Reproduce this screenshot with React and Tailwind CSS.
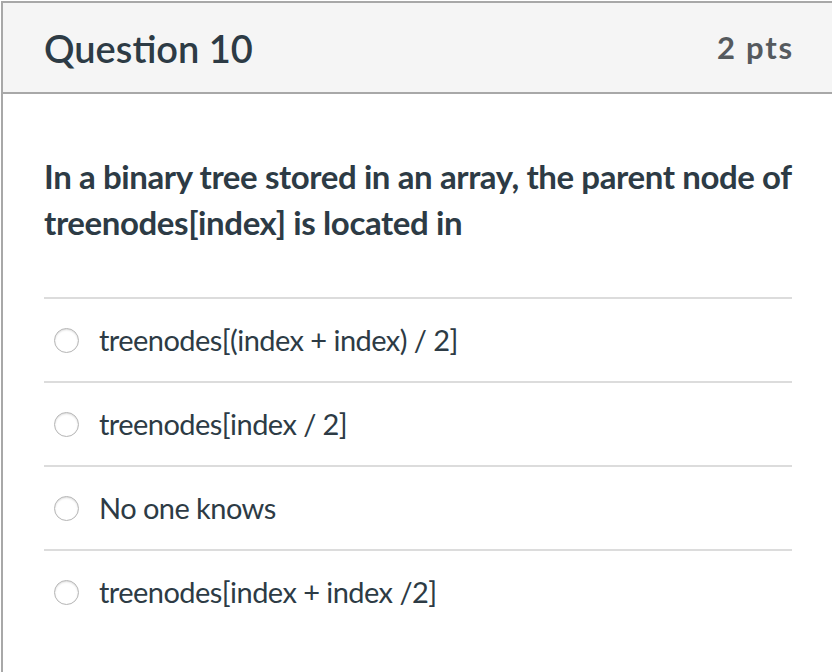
export default function App() {
  const options = [
    'treenodes[(index + index) / 2]',
    'treenodes[index / 2]',
    'No one knows',
    'treenodes[index + index /2]',
  ];

  return (
    <div className="w-[832px] h-[672px] overflow-hidden bg-white pt-px pl-px" style={{ fontFamily: 'Lato, "Open Sans", sans-serif' }}>
      <div className="w-[860px] h-[700px] border-2 border-[#a8a8a8] bg-white">
        <div className="h-[91px] bg-[#f5f5f5] border-b-2 border-[#a8a8a8] flex items-center">
          <div className="w-[748px] ml-[41px] flex items-center justify-between">
            <h2 className="text-[38px] leading-[48px] font-semibold text-[#2d3b45]">Question 10</h2>
            <span className="text-[31px] font-bold text-[#555a5e] tracking-[1.8px] mr-[-2px]">2 pts</span>
          </div>
        </div>
        <div className="w-[748px] ml-[41px]">
          <p className="pt-[59px] text-[33px] leading-[46px] font-bold text-[#2d3b45] tracking-[-0.4px]">
            In a binary tree stored in an array, the parent node of treenodes[index] is located in
          </p>
          <div className="mt-[52px]">
            {options.map((opt) => (
              <div key={opt} className="h-[84px] border-t-2 border-[#dcdcdc] flex items-center">
                <span className="ml-[10px] w-[25px] h-[25px] rounded-full border border-[#b5b5b5] bg-white shadow-[inset_0_1px_2px_rgba(0,0,0,0.15)]" />
                <span className="ml-[20px] text-[29px] text-[#2d3b45] tracking-[-0.55px]">{opt}</span>
              </div>
            ))}
          </div>
        </div>
      </div>
    </div>
  );
}
